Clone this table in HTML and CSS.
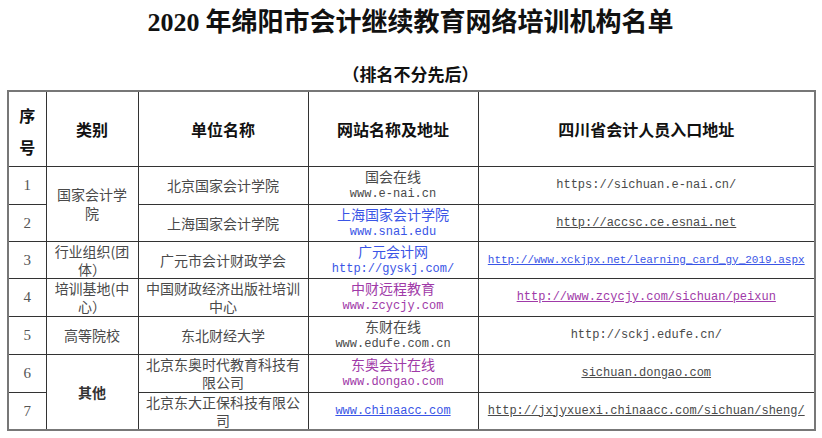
FILE: index.html
```html
<!DOCTYPE html>
<html lang="zh-CN">
<head>
<meta charset="utf-8">
<title>2020年绵阳市会计继续教育网络培训机构名单</title>
<link rel="stylesheet" href="styles.css">
</head>
<body>
<div class="page">
  <h1 class="title"><span class="num">2020</span> 年绵阳市会计继续教育网络培训机构名单</h1>
  <p class="subtitle">（排名不分先后）</p>
  <table class="list">
    <colgroup>
      <col class="c1"><col class="c2"><col class="c3"><col class="c4"><col class="c5">
    </colgroup>
    <thead>
      <tr class="hrow">
        <th class="seq">序<br>号</th>
        <th>类别</th>
        <th>单位名称</th>
        <th>网站名称及地址</th>
        <th>四川省会计人员入口地址</th>
      </tr>
    </thead>
    <tbody>
      <tr class="r38">
        <td class="n">1</td>
        <td rowspan="2" class="cat">国家会计学<br>院</td>
        <td>北京国家会计学院</td>
        <td>国会在线<span class="mono">www.e-nai.cn</span></td>
        <td><span class="mono">https://sichuan.e-nai.cn/</span></td>
      </tr>
      <tr class="r37">
        <td class="n">2</td>
        <td>上海国家会计学院</td>
        <td class="blue">上海国家会计学院<span class="mono">www.snai.edu</span></td>
        <td><span class="mono ul">http://accsc.ce.esnai.net</span></td>
      </tr>
      <tr class="r37">
        <td class="n">3</td>
        <td>行业组织(团<br>体）</td>
        <td>广元市会计财政学会</td>
        <td class="blue">广元会计网<span class="mono">http://gyskj.com/</span></td>
        <td><span class="mono small ul blue">http://www.xckjpx.net/learning_card_gy_2019.aspx</span></td>
      </tr>
      <tr class="r38">
        <td class="n">4</td>
        <td>培训基地(中<br>心）</td>
        <td>中国财政经济出版社培训<br>中心</td>
        <td class="purple">中财远程教育<span class="mono">www.zcycjy.com</span></td>
        <td><span class="mono ul purple">http://www.zcycjy.com/sichuan/peixun</span></td>
      </tr>
      <tr class="r38">
        <td class="n">5</td>
        <td>高等院校</td>
        <td>东北财经大学</td>
        <td>东财在线<span class="mono">www.edufe.com.cn</span></td>
        <td><span class="mono">http://sckj.edufe.cn/</span></td>
      </tr>
      <tr class="r38">
        <td class="n">6</td>
        <td rowspan="2" class="other">其他</td>
        <td>北京东奥时代教育科技有<br>限公司</td>
        <td class="purple">东奥会计在线<span class="mono">www.dongao.com</span></td>
        <td><span class="mono ul">sichuan.dongao.com</span></td>
      </tr>
      <tr class="r37">
        <td class="n">7</td>
        <td>北京东大正保科技有限公<br>司</td>
        <td><span class="mono ul blue">www.chinaacc.com</span></td>
        <td><span class="mono ul">http://jxjyxuexi.chinaacc.com/sichuan/sheng/</span></td>
      </tr>
    </tbody>
  </table>
</div>
</body>
</html>
```

FILE: styles.css
```css
* { box-sizing: border-box; }
html, body { margin: 0; padding: 0; background: #fff; }
body {
  font-family: "Noto Sans CJK SC", "Liberation Serif", serif;
  color: #444;
}
.page {
  width: 822px;
  padding: 5px 0 0 7px;
}
.title {
  margin: 0;
  width: 807px;
  text-align: center;
  font-size: 26px;
  line-height: 30px;
  font-weight: bold;
  color: #111;
}
.title .num { font-family: "Liberation Serif", serif; }
.subtitle {
  margin: 24px 0 4px 0;
  width: 807px;
  text-align: center;
  font-size: 17px;
  line-height: 24px;
  font-weight: bold;
  color: #111;
}
.list {
  border-collapse: collapse;
  width: 807px;
  table-layout: fixed;
  border: 2px solid #777;
}
.c1 { width: 38px; }
.c2 { width: 92px; }
.c3 { width: 170px; }
.c4 { width: 170px; }
.c5 { width: 337px; }
.list th, .list td {
  border: 1px solid #333;
  padding: 0 2px;
  text-align: center;
  vertical-align: middle;
}
.list th {
  font-size: 16px;
  font-weight: bold;
  color: #111;
  line-height: 22px;
}
.list th.seq { line-height: 32px; padding-top: 4px; }
.hrow { height: 75px; }
.r38 { height: 38px; }
.r37 { height: 37px; }
.list td {
  font-size: 14px;
  line-height: 18px;
  color: #4a4a4a;
}
.list td.cat { line-height: 19px; }
.list td.n {
  font-family: "Liberation Serif", serif;
  font-size: 15px;
  color: #555;
}
.list td.other { color: #333; font-weight: bold; }
.mono {
  display: block;
  font-family: "Liberation Mono", monospace;
  font-size: 12px;
  line-height: 18px;
}
.mono.small { font-size: 11px; }
.ul { text-decoration: underline; }
.list .blue { color: #3a55e6; }
.list .purple { color: #a03aa8; }
```
